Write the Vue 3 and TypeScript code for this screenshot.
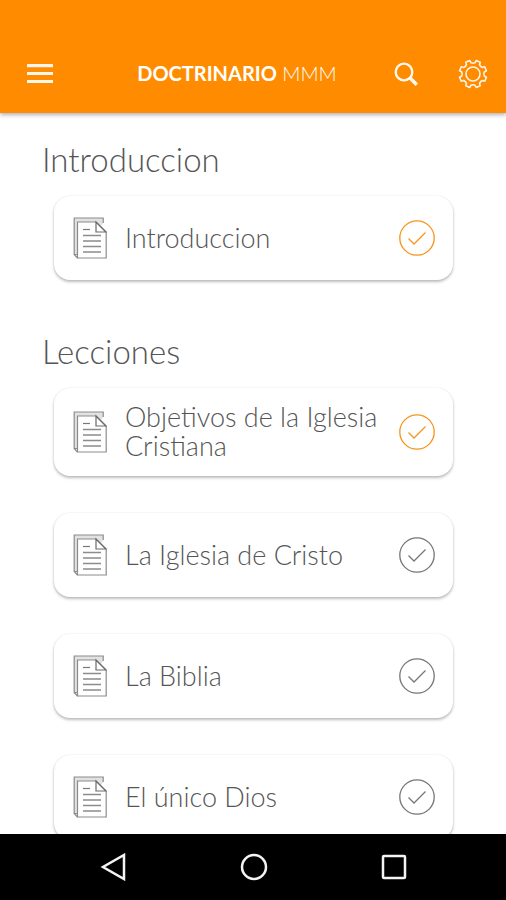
<script setup lang="ts">
import { ref } from 'vue'

interface Lesson {
  title: string
  done: boolean
}

interface Section {
  title: string
  lessons: Lesson[]
}

const sections = ref<Section[]>([
  { title: 'Introduccion', lessons: [{ title: 'Introduccion', done: true }] },
  {
    title: 'Lecciones',
    lessons: [
      { title: 'Objetivos de la Iglesia Cristiana', done: true },
      { title: 'La Iglesia de Cristo', done: false },
      { title: 'La Biblia', done: false },
      { title: 'El único Dios', done: false },
    ],
  },
])

// Outline of an eight-toothed cog centred on the origin.
function cogPath(teeth: number, inner: number, outer: number): string {
  const step = (Math.PI * 2) / teeth
  const at = (angle: number, radius: number): string =>
    `${(Math.sin(angle) * radius).toFixed(2)} ${(-Math.cos(angle) * radius).toFixed(2)}`
  let d = ''
  for (let i = 0; i < teeth; i++) {
    const mid = (i + 0.5) * step
    d += `${i === 0 ? 'M' : 'L'}${at(mid - step * 0.28, inner)}`
    d += `L${at(mid - step * 0.2, outer)}`
    d += `L${at(mid + step * 0.2, outer)}`
    d += `L${at(mid + step * 0.28, inner)}`
    d += `Q${at(mid + step * 0.5, inner - 1)} ${at(mid + step * 0.72, inner)}`
  }
  return d + 'Z'
}

const cog = cogPath(8, 11.4, 13.8)
</script>

<template>
  <div class="app">
    <header class="bar">
      <button class="menu" type="button" aria-label="Menu">
        <svg width="26" height="20" viewBox="0 0 26 20">
          <path d="M0 1.600h26M0 9.500h26M0 17.500h26" stroke="#fff" stroke-opacity="0.92" stroke-width="3.200" />
        </svg>
      </button>
      <h1 class="brand"><strong>DOCTRINARIO</strong> MMM</h1>
      <div class="actions">
        <button type="button" aria-label="Buscar">
          <svg width="24" height="24" viewBox="0 0 24 24" fill="none" stroke="#fff" stroke-opacity="0.95">
            <circle cx="10" cy="10" r="8.300" stroke-width="2.300" />
            <path d="M15.800 15.800l7 7" stroke-width="3.400" />
          </svg>
        </button>
        <button type="button" aria-label="Ajustes">
          <svg width="30" height="30" viewBox="-15 -15 30 30" fill="none" stroke="#fff" stroke-opacity="0.9" stroke-width="1.600" stroke-linejoin="round">
            <path :d="cog" />
            <circle r="7" />
          </svg>
        </button>
      </div>
    </header>

    <main class="content">
      <section v-for="section in sections" :key="section.title" class="section">
        <h2>{{ section.title }}</h2>
        <ul>
          <li v-for="lesson in section.lessons" :key="lesson.title">
            <a class="card" href="#">
              <svg class="doc" width="34" height="42" viewBox="0 0 34 42" fill="none" stroke="#8c8c8c" stroke-width="1.200">
                <path d="M4.500 37.500H1.200V1h29v5" fill="#e2e2e2" />
                <path d="M1.200 37.500l3.300 3.500" />
                <path d="M4.500 5h18.500L33.200 15v26H4.500z" fill="#fff" />
                <path d="M23 5v10h10z" stroke="#6a6a6a" />
                <path d="M10 12.500h7" stroke="#777" />
                <path d="M10 18.500h18M10 24h18M10 29.500h18M10 35h18" stroke-width="1.500" />
              </svg>
              <span class="name">{{ lesson.title }}</span>
              <svg class="check" :class="{ done: lesson.done }" width="36" height="36" viewBox="0 0 36 36" fill="none">
                <circle cx="18" cy="18" r="17.200" />
                <path d="M9.500 18.500l5.500 5.500L26.500 12.500" />
              </svg>
            </a>
          </li>
        </ul>
      </section>
    </main>

    <nav class="system" aria-label="Sistema">
      <button type="button" aria-label="Atrás">
        <svg width="28" height="28" viewBox="0 0 28 28"><path d="M24 2v24L3 14z" /></svg>
      </button>
      <button type="button" aria-label="Inicio">
        <svg width="28" height="28" viewBox="0 0 28 28"><circle cx="14" cy="14" r="12" /></svg>
      </button>
      <button type="button" aria-label="Recientes">
        <svg width="28" height="28" viewBox="0 0 28 28"><rect x="3" y="3" width="22" height="22" rx="1" /></svg>
      </button>
    </nav>
  </div>
</template>

<style>
body {
  background: #fff;
}
</style>

<style scoped>
.app {
  display: flex;
  flex-direction: column;
  height: 100vh;
  font-family: Lato, "Open Sans", sans-serif;
  color: #555;
}

button {
  display: flex;
  align-items: center;
  justify-content: center;
  border: 0;
  padding: 0;
  background: none;
}

.bar {
  position: relative;
  display: grid;
  grid-template-columns: 80px 1fr 112px;
  align-items: center;
  flex: none;
  padding: 34px 0 0;
  height: 79px;
  background: #ff8c00;
  box-shadow: 0 2px 4px rgba(0, 0, 0, 0.3);
}

.brand {
  margin: 0;
  padding-bottom: 2px;
  color: #fff;
  font-size: 20px;
  font-weight: 300;
  text-align: center;
  white-space: nowrap;
}

.brand strong {
  font-weight: 700;
}

.actions {
  display: flex;
  justify-content: space-between;
  padding-right: 18px;
}

.content {
  flex: 1;
  min-height: 0;
  overflow: hidden;
  padding: 26px 53px 0 54px;
}

.section {
  margin-bottom: 51px;
}

h2 {
  margin: 0 0 17px -12px;
  font-size: 33px;
  line-height: 40px;
  font-weight: 300;
}

ul {
  display: flex;
  flex-direction: column;
  gap: 37px;
  margin: 0;
  padding: 0;
  list-style: none;
}

.card {
  display: flex;
  align-items: center;
  box-sizing: border-box;
  min-height: 84px;
  padding: 14px 18px 14px 19px;
  border-radius: 16px;
  background: #fff;
  box-shadow: 0 2px 3px rgba(0, 0, 0, 0.25), 0 0 2px rgba(0, 0, 0, 0.1);
  color: inherit;
  text-decoration: none;
}

.doc,
.check {
  flex: none;
}

.name {
  flex: 1;
  margin: 0 8px 0 18px;
  padding-bottom: 2px;
  font-size: 27px;
  line-height: 29px;
  font-weight: 300;
}

.check {
  stroke: #777;
  stroke-width: 1.3;
}

.check.done {
  stroke: #f7941d;
}

.system {
  display: grid;
  grid-template-columns: repeat(3, 1fr);
  flex: none;
  height: 66px;
  padding: 0 42px 0 44px;
  background: #000;
}

.system svg {
  fill: none;
  stroke: #f4f4f4;
  stroke-width: 2.5;
}
</style>
